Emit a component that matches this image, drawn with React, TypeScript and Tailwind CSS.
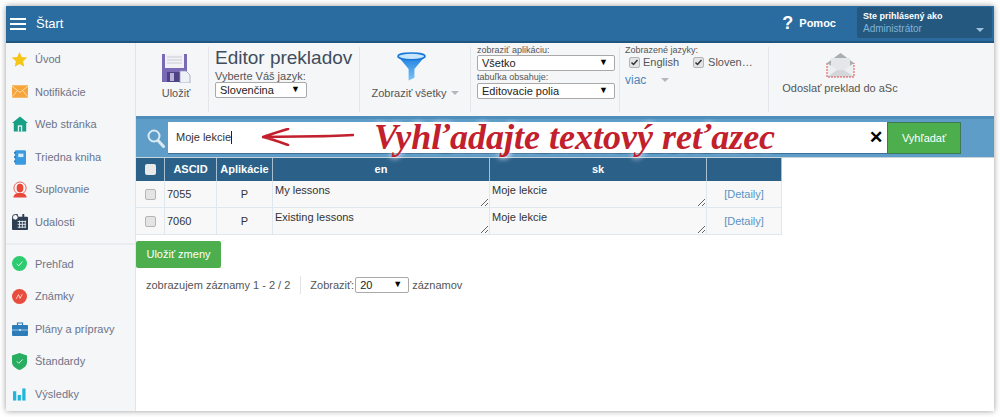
import type { ReactNode } from 'react'

const font = { fontFamily: '"Liberation Sans", Arial, sans-serif' }

function Star() {
    return (
        <svg width="17" height="17" viewBox="0 0 18 18">
            <path d="M9 1l2.4 5.4 5.8.6-4.4 3.9 1.3 5.8L9 13.7l-5.100 3 1.300-5.800L.8 7l5.800-.6z" fill="#f5c518" />
        </svg>
    )
}

function Mail() {
    return (
        <svg width="16" height="13" viewBox="0 0 18 14">
            <rect width="18" height="14" fill="#f5a53a" />
            <path d="M0 1l9 7 9-7M0 13l6-7M18 13l-6-7" fill="none" stroke="#fde2b8" strokeWidth="1" />
        </svg>
    )
}

function House() {
    return (
        <svg width="16" height="16" viewBox="0 0 18 17">
            <path d="M9 0l9 7.500h-2V17H2V7.500H0z" fill="#17a085" />
            <rect x="6.500" y="10" width="5" height="7" fill="#e8f6f3" />
            <rect x="8" y="11.500" width="2" height="5.500" fill="#17a085" />
        </svg>
    )
}

function Book() {
    return (
        <svg width="12" height="15" viewBox="0 0 14 17">
            <rect x="1" width="13" height="17" rx="1.500" fill="#3a9be0" />
            <rect y="2" width="2" height="2" fill="#2b78b5" />
            <rect y="7" width="2" height="2" fill="#2b78b5" />
            <rect y="12" width="2" height="2" fill="#2b78b5" />
            <rect x="5" y="4" width="6" height="4" fill="#d5ebfa" />
        </svg>
    )
}

function Person() {
    return (
        <svg width="16" height="17" viewBox="0 0 17 17">
            <circle cx="8.500" cy="7" r="6.500" fill="none" stroke="#e9594a" strokeWidth="1" />
            <ellipse cx="8.500" cy="7" rx="3.600" ry="4.600" fill="#e9473a" />
            <path d="M1.500 17c.4-3.600 3-4.800 7-4.800s6.600 1.200 7 4.800z" fill="#e9473a" />
        </svg>
    )
}

function Calendar() {
    return (
        <svg width="16" height="16" viewBox="0 0 17 17">
            <rect y="3" width="17" height="14" rx="1" fill="#2c3e50" />
            <rect x="4" y="0" width="2" height="4" fill="#2c3e50" />
            <rect x="11" y="0" width="2" height="4" fill="#2c3e50" />
            <path d="M6 8h9M6 11h9M6 14h9M8 7v8M11 7v8M14 7v8" stroke="#dfe4e8" strokeWidth="1" />
            <circle cx="3.500" cy="3.500" r="3" fill="#f5f6f8" stroke="#2c3e50" />
        </svg>
    )
}

function CheckCircle() {
    return (
        <svg width="15" height="15" viewBox="0 0 16 16">
            <circle cx="8" cy="8" r="8" fill="#2ecc71" />
            <path d="M5 8.300l2.200 2.200L11 6" fill="none" stroke="#dff7e8" strokeWidth="1" />
        </svg>
    )
}

function Grade() {
    return (
        <svg width="15" height="15" viewBox="0 0 16 16">
            <circle cx="8" cy="8" r="8" fill="#e74c3c" />
            <path d="M4.500 10.500L7 6l1.500 4L11 5.500" fill="none" stroke="#fbd5d0" strokeWidth="1" />
        </svg>
    )
}

function Briefcase() {
    return (
        <svg width="16" height="14" viewBox="0 0 16 14">
            <path d="M5.500 3V1h5v2" fill="none" stroke="#2b7cb8" strokeWidth="1.200" />
            <rect y="3" width="16" height="11" rx="1" fill="#2b7cb8" />
            <path d="M0 8h16" stroke="#bcdcf2" strokeWidth="0.800" />
            <rect x="7" y="7" width="2" height="2" fill="#bcdcf2" />
        </svg>
    )
}

function Shield() {
    return (
        <svg width="15" height="17" viewBox="0 0 15 17">
            <path d="M7.500 0l7.500 2.500V9c0 4-3.500 6.500-7.500 8C3.500 15.500 0 13 0 9V2.500z" fill="#27ae60" />
            <path d="M4.800 8.300l2 2L10.500 6.500" fill="none" stroke="#d5f2e1" strokeWidth="1" />
        </svg>
    )
}

function Bars() {
    return (
        <svg width="13" height="13" viewBox="0 0 14 13">
            <rect y="3" width="3.500" height="10" fill="#1fb6dc" />
            <rect x="5" y="7" width="3.500" height="6" fill="#1fb6dc" />
            <rect x="10" width="3.500" height="13" fill="#1fb6dc" />
        </svg>
    )
}

function FloppyIcon() {
    return (
        <svg width="29" height="30" viewBox="0 0 29 30">
            <path d="M0 1h25v28H0z" fill="#7a69b5" />
            <rect x="3" y="1" width="19" height="14" fill="#f2f2f6" />
            <path d="M5 4h15M5 7h15M5 10h15" stroke="#c9c9d6" strokeWidth="1" />
            <rect x="5" y="19" width="14" height="10" fill="#4e4285" />
            <rect x="8" y="20" width="4" height="8" fill="#b9b2d9" />
            <path d="M18 18h6l4 4v8H18z" fill="#eef1f7" stroke="#9aa4bd" strokeWidth="0.800" />
        </svg>
    )
}

function FunnelIcon() {
    return (
        <svg width="29" height="30" viewBox="0 0 30 30">
            <defs>
                <linearGradient id="funnel" x1="0" y1="0" x2="0" y2="1">
                    <stop offset="0" stopColor="#1f7fe0" />
                    <stop offset="1" stopColor="#7cc4f7" />
                </linearGradient>
            </defs>
            <path d="M1 4L12 17v12l6-3v-9L29 4z" fill="url(#funnel)" />
            <ellipse cx="15" cy="4" rx="14" ry="3.500" fill="#c8e6fb" stroke="#1877d6" strokeWidth="1.600" />
        </svg>
    )
}

function EnvelopeIcon() {
    return (
        <svg width="29" height="26" viewBox="0 0 29 26">
            <path d="M1 11L14.500 1 28 11v14H1z" fill="#a9aeb0" />
            <rect x="5" y="6" width="19" height="12" fill="#e4e6e7" />
            <path d="M1 11l13.500 9L28 11v14H1z" fill="#eceeef" />
            <path d="M1 25l10-7h7l10 7" fill="#d4d7d9" />
            <path d="M1 11v14h27V11" fill="none" stroke="#d9534f" strokeWidth="1" strokeDasharray="2 1" />
        </svg>
    )
}

function SearchIcon() {
    return (
        <svg width="18" height="19" viewBox="0 0 18 19">
            <circle cx="7" cy="7" r="5.500" fill="none" stroke="#dce9f3" strokeWidth="2" />
            <path d="M11 11.500l5.500 6" stroke="#dce9f3" strokeWidth="3" strokeLinecap="round" />
        </svg>
    )
}

function Caret({ color = '#b3b8bd' }: { color?: string }) {
    return <span className="inline-block w-0 h-0 border-x-[4px] border-x-transparent border-t-[4px]" style={{ borderTopColor: color }} />
}

function FakeSelect({ value, className }: { value: string; className: string }) {
    return (
        <div className={`flex items-center justify-between h-[16px] bg-white border border-[#a9a9a9] rounded-[2px] pl-1 pr-[6px] text-[11px] text-[#222] ${className}`}>
            <span>{value}</span>
            <span className="text-[9px] text-black">▼</span>
        </div>
    )
}

function Check({ on }: { on?: boolean }) {
    return (
        <span className="flex items-center justify-center w-[11px] h-[11px] rounded-[2px] bg-[#e4e4e4] border border-[#b5b5b5]">
            {on && (
                <svg width="9" height="9" viewBox="0 0 9 9">
                    <path d="M1.500 4.500l2 2L7.500 2" fill="none" stroke="#333" strokeWidth="1.500" />
                </svg>
            )}
        </span>
    )
}

function NavItem({ icon, label }: { icon: ReactNode; label: string }) {
    return (
        <div className="flex items-center h-[32.6px]">
            <div className="w-[27px] flex justify-center">{icon}</div>
            <span className="ml-[2px] text-[11px] text-[#6d7488]">{label}</span>
        </div>
    )
}

function Th({ className, children }: { className: string; children?: ReactNode }) {
    return <div className={`flex items-center justify-center border-r border-[#a8bfd2] font-bold text-white text-[11px] ${className}`}>{children}</div>
}

function Row({ id, en, sk }: { id: string; en: string; sk: string }) {
    const area = 'block w-full h-full bg-transparent text-[11px] text-[#333] leading-[14px] pl-[2px] pt-[2px] outline-none'
    return (
        <div className="flex h-[27px] border-b border-[#dfe8ef] bg-[#f8f8f8] text-[11px] text-[#333]">
            <div className="w-[29px] flex items-center justify-center border-r border-[#dfe8ef]">
                <Check />
            </div>
            <div className="w-[52px] flex items-center pl-[2px] border-r border-[#dfe8ef]">{id}</div>
            <div className="w-[56px] flex items-center justify-center border-r border-[#dfe8ef]">P</div>
            <div className="w-[217px] border-r border-[#dfe8ef]">
                <textarea className={area} defaultValue={en} />
            </div>
            <div className="w-[217px] border-r border-[#dfe8ef]">
                <textarea className={area} defaultValue={sk} />
            </div>
            <div className="w-[75px] flex items-center justify-center border-r border-[#dfe8ef] text-[#5b93c4]">[Detaily]</div>
        </div>
    )
}

export default function App() {
    return (
        <div className="h-[417px] w-[1000px] bg-white p-[6px] overflow-hidden" style={font}>
            <div className="h-[405px] w-[988px] flex flex-col shadow-[0_0_6px_rgba(0,0,0,0.4)]">
                {/* Top bar */}
                <header className="flex items-center h-[37px] shrink-0 bg-[#2b6ca0] border-b-2 border-[#20557f] text-white">
                    <div className="ml-1 w-[16px] flex flex-col gap-[3px]">
                        <span className="h-[2px] bg-white" />
                        <span className="h-[2px] bg-white" />
                        <span className="h-[2px] bg-white" />
                    </div>
                    <span className="ml-[10px] text-[13px]">Štart</span>
                    <span className="ml-auto text-[18px] font-bold">?</span>
                    <span className="ml-[6px] mr-[21px] text-[11px] font-bold">Pomoc</span>
                    <div className="relative w-[135px] h-[31px] mr-[2px] mb-[2px] rounded-[2px] bg-[#24587f] pl-[6px] pt-[3px]">
                        <div className="text-[9px] leading-[12px] font-bold">Ste prihlásený ako</div>
                        <div className="text-[10px] leading-[13px] text-[#7fb3da]">Administrátor</div>
                        <span className="absolute right-[8px] bottom-[6px] flex">
                            <Caret color="#9fc0da" />
                        </span>
                    </div>
                </header>

                <div className="flex flex-1 min-h-0">
                    {/* Sidebar */}
                    <aside className="w-[130px] shrink-0 bg-[#f5f6f8] border-r border-[#e2e4e7]">
                        <NavItem icon={<Star />} label="Úvod" />
                        <NavItem icon={<Mail />} label="Notifikácie" />
                        <NavItem icon={<House />} label="Web stránka" />
                        <NavItem icon={<Book />} label="Triedna kniha" />
                        <NavItem icon={<Person />} label="Suplovanie" />
                        <NavItem icon={<Calendar />} label="Udalosti" />
                        <div className="h-[2px] mt-[4px] mb-[3px] bg-[#eaecef]" />
                        <NavItem icon={<CheckCircle />} label="Prehľad" />
                        <NavItem icon={<Grade />} label="Známky" />
                        <NavItem icon={<Briefcase />} label="Plány a prípravy" />
                        <NavItem icon={<Shield />} label="Štandardy" />
                        <NavItem icon={<Bars />} label="Výsledky" />
                    </aside>

                    <main className="relative flex-1 min-w-0 flex flex-col">
                        {/* Toolbar */}
                        <div className="flex h-[73px] py-[4px] shrink-0 bg-[#f5f6f8] text-[#555]">
                            <div className="w-[73px] flex flex-col items-center pt-[6px] pl-[8px] border-r border-[#e4e6e9]">
                                <FloppyIcon />
                                <span className="text-[11px] mt-[2px]">Uložiť</span>
                            </div>
                            <div className="w-[151px] pl-[6px] border-r border-[#e4e6e9]">
                                <div className="text-[19px] leading-[24px] -mt-[1px] whitespace-nowrap text-[#3f4d5c]">Editor prekladov</div>
                                <div className="text-[11px] leading-[12px]">Vyberte Váš jazyk:</div>
                                <FakeSelect value="Slovenčina" className="w-[92px]" />
                            </div>
                            <div className="w-[111px] flex flex-col items-center pt-[5px] border-r border-[#e4e6e9]">
                                <span className="mr-[8px] flex"><FunnelIcon /></span>
                                <div className="flex items-center gap-[4px] mt-[3px] text-[11px]">
                                    Zobraziť všetky
                                    <Caret />
                                </div>
                            </div>
                            <div className="w-[149px] pl-[6px] border-r border-[#e4e6e9]">
                                <div className="text-[9px] leading-[10px] -mt-[2px] whitespace-nowrap">zobraziť aplikáciu:</div>
                                <FakeSelect value="Všetko" className="w-[138px]" />
                                <div className="text-[9px] leading-[11px] mt-[1px] whitespace-nowrap">tabuľka obsahuje:</div>
                                <FakeSelect value="Editovacie polia" className="w-[138px]" />
                            </div>
                            <div className="w-[149px] pl-[5px] border-r border-[#e4e6e9]">
                                <div className="text-[9px] leading-[10px] -mt-[2px] whitespace-nowrap">Zobrazené jazyky:</div>
                                <div className="flex items-center pl-[4px] text-[11px] h-[15px]">
                                    <Check on />
                                    <span className="ml-[3px]">English</span>
                                    <span className="ml-[14px]"><Check on /></span>
                                    <span className="ml-[4px]">Sloven…</span>
                                </div>
                                <div className="flex items-center mt-[1px] text-[12px] text-[#4a86b8]">
                                    viac
                                    <span className="ml-[15px] flex"><Caret /></span>
                                </div>
                            </div>
                            <div className="flex-1 flex flex-col items-center pt-[5px] pr-[83px]">
                                <EnvelopeIcon />
                                <span className="text-[11px] mt-[2px] whitespace-nowrap">Odoslať preklad do aSc</span>
                            </div>
                        </div>

                        {/* Search bar */}
                        <div className="flex items-center h-[42px] shrink-0 bg-[#5f9dc9] border-t-[3px] border-[#4f8dbb] border-b-[1px] border-b-[#c9d3da] pr-[33px]">
                            <div className="w-[32px] flex justify-center pl-[8px]">
                                <SearchIcon />
                            </div>
                            <div className="flex-1 flex items-center justify-between h-[32px] bg-white border-b border-[#3f6f99] pl-2 pr-[4px] text-[11px] text-[#333]">
                                <span className="border-r border-[#222] leading-[13px]">Moje lekcie</span>
                                <span className="text-[17px] font-bold text-black leading-none">✕</span>
                            </div>
                            <button className="w-[74px] h-[32px] bg-[#4cae4c] border border-[#3d7a53] text-white text-[11px]">Vyhľadať</button>
                        </div>

                        {/* Table */}
                        <div className="w-[646px] shrink-0">
                            <div className="flex h-[23px] bg-[#2b6089]">
                                <Th className="w-[29px]">
                                    <span className="w-[11px] h-[11px] rounded-[2px] bg-[#e8e8e8]" />
                                </Th>
                                <Th className="w-[52px]">ASCID</Th>
                                <Th className="w-[56px]">Aplikácie</Th>
                                <Th className="w-[217px]">en</Th>
                                <Th className="w-[217px]">sk</Th>
                                <Th className="w-[75px]" />
                            </div>
                            <Row id="7055" en="My lessons" sk="Moje lekcie" />
                            <Row id="7060" en="Existing lessons" sk="Moje lekcie" />
                        </div>

                        <button className="mt-[6px] w-[85px] h-[27px] rounded-[2px] bg-[#4cae4c] text-white text-[11px]">Uložiť zmeny</button>

                        <div className="flex items-center mt-[8px] pl-[10px] h-[18px] text-[11px] text-[#555]">
                            <span>zobrazujem záznamy 1 - 2 / 2</span>
                            <span className="w-px h-[18px] ml-[10px] mr-[9px] bg-[#e3e3e3]" />
                            <span>Zobraziť:</span>
                            <FakeSelect value="20" className="w-[54px] ml-[1px]" />
                            <span className="ml-[3px]">záznamov</span>
                        </div>

                        {/* Hand-written annotation over the search field */}
                        <svg className="absolute left-[126px] top-[85px]" width="92" height="18" viewBox="0 0 92 18">
                            <path d="M1 9C10 6 18 3 26 1M1 9c9 2 17 5 25 8M1 9C30 8 60 9 91 7" fill="none" stroke="#c2202c" strokeWidth="2.600" strokeLinecap="round" />
                        </svg>
                        <span className="absolute left-[238px] top-[74px] whitespace-nowrap text-[36px] leading-[40px] font-bold italic text-[#c2202c] [text-shadow:0_0_6px_#fff,0_0_6px_#fff]" style={{ fontFamily: '"Liberation Serif", serif' }}>
                            Vyhľadajte textový reťazec
                        </span>
                    </main>
                </div>
            </div>
        </div>
    )
}
